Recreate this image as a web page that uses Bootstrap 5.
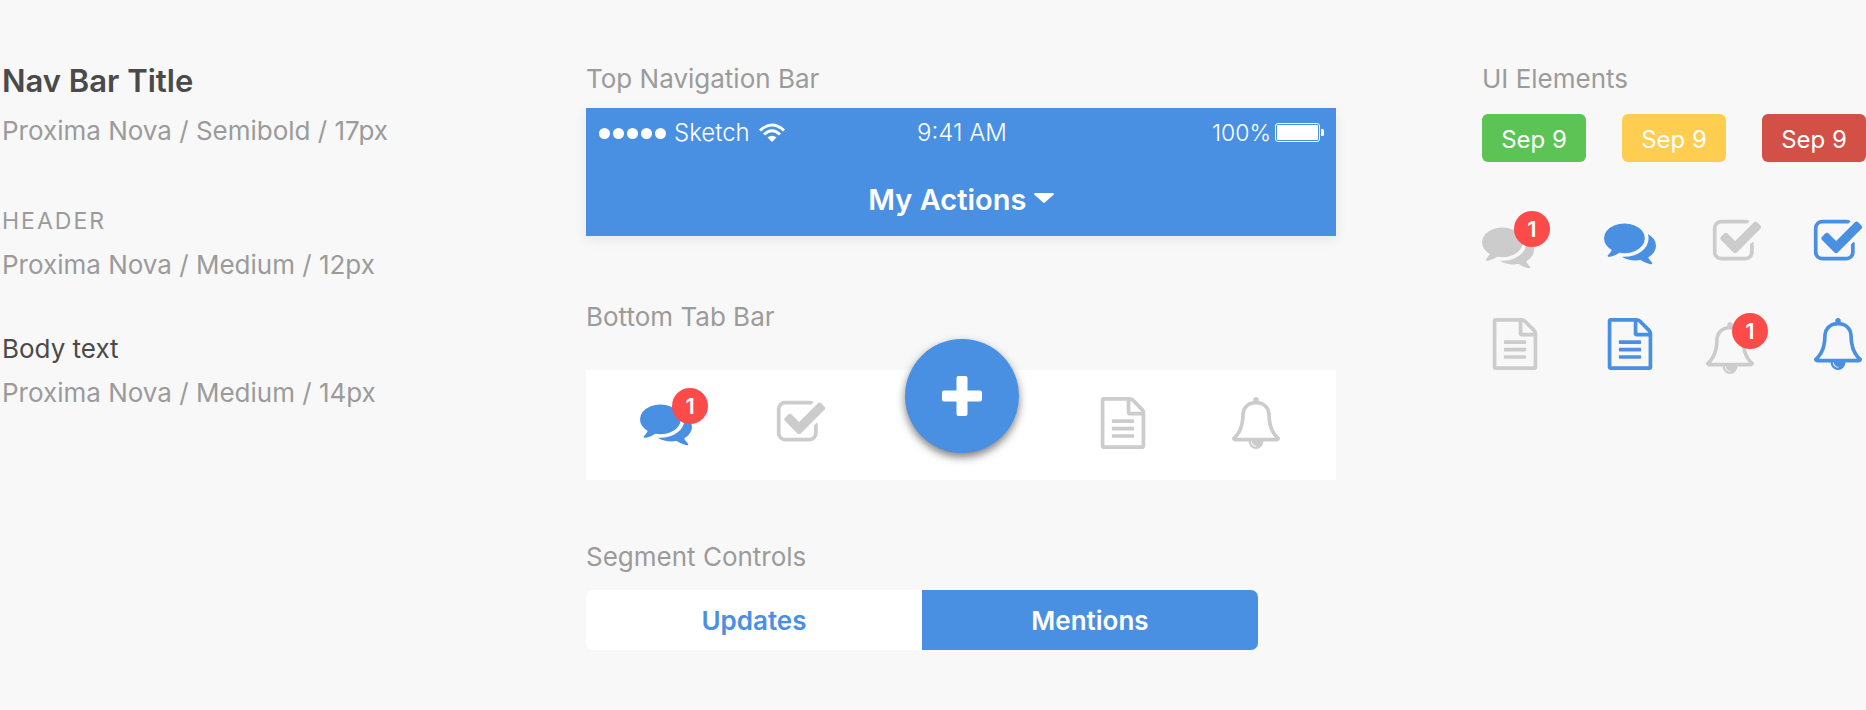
<!DOCTYPE html>
<html lang="en">
<head>
<meta charset="utf-8">
<meta name="viewport" content="width=device-width, initial-scale=1">
<title>Mobile UI style guide</title>
<link rel="stylesheet" href="https://cdn.jsdelivr.net/npm/bootstrap@5.3.0/dist/css/bootstrap.min.css">
<style>
  :root { --blue: #4a90e2; --alert: #fc4b48; --idle: #cccccc; --muted: #9b9b9b; --ink: #4a4a4a; }
  body { background: #f8f8f8; color: var(--ink); font-family: Inter, "Liberation Sans", sans-serif; }
  .guide { display: grid; grid-template-columns: 586fr 896fr 384fr; padding-top: 63px; }
  .type-col { padding-left: 2px; }
  .bars-col { padding-right: 16.3%; }
  .label-text { font-size: 26px; line-height: 32px; font-weight: 400; color: var(--muted); margin: 0; }
  .sample-title { font-size: 31px; line-height: 36px; font-weight: 600; margin: 0 0 16px; }
  .sample-header { font-size: 23px; line-height: 28px; letter-spacing: 2px; font-weight: 400; color: var(--muted); margin: 60px 0 14px; }
  .sample-body { font-size: 26px; line-height: 32px; margin: 52px 0 12px; }

  .phone-nav { background: var(--blue); color: #fff; height: 128px; margin: 13px 0 65px; box-shadow: 0 4px 12px rgba(0,0,0,.07); }
  .status-bar { display: grid; grid-template-columns: 1fr auto 1fr; padding: 10px 11px 0 13px; font-size: 24px; line-height: 30px; font-weight: 300; }
  .signal { display: flex; gap: 3px; margin-right: 8px; }
  .signal i { width: 11px; height: 11px; border-radius: 50%; background: #fff; }
  .percent { font-size: 23px; }
  .title-btn { font-size: 29px; line-height: 40px; font-weight: 600; color: #fff; background: none; border: 0; padding: 0; }

  .tab-bar { display: grid; grid-template: 110px / 148fr 120fr 202fr 120fr 144fr; padding: 0 8px 0 6px; background: #fff; margin: 37px 0 61px; justify-items: center; align-items: center; }
  .icon-btn { position: relative; display: block; padding: 0; border: 0; background: none; color: var(--idle); line-height: 0; }
  .icon-btn svg { width: 52px; height: 52px; fill: currentColor; }
  .icon-btn.on { color: var(--blue); }
  .tab-bar .icon-btn { margin-bottom: 4px; }
  .count { position: absolute; left: 32px; top: -9px; width: 36px; height: 36px; border-radius: 50%; background: var(--alert); color: #fff; font-size: 22px; line-height: 36px; font-weight: 600; text-align: center; }
  .count.near { left: 28px; }
  .fab { width: 114px; height: 114px; border: 0; border-radius: 50%; background: var(--blue); box-shadow: 0 4px 8px rgba(0,0,0,.5); margin: -62px 0 0; padding: 0; align-self: center; }
  .tab-bar .fab { margin: -58px 0 0; }

  .segments { display: flex; width: 89.6%; height: 60px; margin-top: 17px; }
  .segments .btn { flex: 1; display: flex; align-items: center; justify-content: center; border: 0; border-radius: 0; font-size: 26px; font-weight: 600; background: #fff; color: var(--blue); }
  .segments .btn:first-of-type { border-radius: 7px 0 0 7px; }
  .segments .btn:last-of-type { border-radius: 0 7px 7px 0; }
  .segments .btn-check:checked + .btn { background: var(--blue); color: #fff; }

  .date-row { margin-top: 19px; }
  .date-tag { width: 104px; height: 48px; line-height: 52px; border-radius: 6px; color: #fff; font-size: 24px; text-align: center; }
  .tag-green { background: #5cc455; } .tag-yellow { background: #ffcd4f; } .tag-red { background: #d35046; }
  .icon-grid { display: grid; grid-template-columns: 122fr 100fr 108fr 54fr; row-gap: 46px; margin-top: 54px; }
  .icon-grid > div { height: 56px; }
  .shift { padding-left: 7px; }
  .drop { padding-top: 4px; }
</style>
</head>
<body>
<svg class="d-none">
  <symbol id="comments" viewBox="0 0 1792 1792"><path d="M1408 768q0 139-94 257t-256.500 186.500-353.500 68.500q-86 0-176-16-124 88-278 128-36 9-86 16h-3q-11 0-20.500-8t-11.500-21q-1-3-1-6.500t.5-6.500 2-6l2.500-5t3.500-5.500 4-5 4.500-5 4-4.500q5-6 23-25t26-29.500 22.500-29 25-38.500 20.500-44q-124-72-195-177t-71-224q0-139 94-257t256.500-186.500 353.500-68.500 353.500 68.500 256.500 186.500 94 257zm384 256q0 120-71 224.500t-195 176.500q10 24 20.500 44t25 38.500 22.500 29 26 29.500 23 25q1 1 4 4.500t4.500 5 4 5 3.500 5.500l2.500 5t2 6 .5 6.500-1 6.500q-3 14-13 22t-22 7q-50-7-86-16-154-40-278-128-90 16-176 16-271 0-472-132 58 4 88 4 161 0 309-45t264-129q125-92 192-212t67-254q0-77-23-152 129 71 204 178t75 230z"/></symbol>
  <symbol id="check" viewBox="0 0 1792 1792"><path d="M1472 930v318q0 119-84.500 203.500t-203.500 84.500h-832q-119 0-203.500-84.500t-84.500-203.500v-832q0-119 84.500-203.500t203.500-84.500h832q63 0 117 25 15 7 18 23 3 17-9 29l-49 49q-10 10-23 10-3 0-9-2-23-6-45-6h-832q-66 0-113 47t-47 113v832q0 66 47 113t113 47h832q66 0 113-47t47-113v-254q0-13 9-22l64-64q10-10 23-10 6 0 12 3 20 8 20 29zm231-489l-814 814q-24 24-57 24t-57-24l-430-430q-24-24-24-57t24-57l110-110q24-24 57-24t57 24l263 263 647-647q24-24 57-24t57 24l110 110q24 24 24 57t-24 57z"/></symbol>
  <symbol id="file" viewBox="0 0 1792 1792"><path d="M1596 380q28 28 48 76t20 88v1152q0 40-28 68t-68 28h-1344q-40 0-68-28t-28-68v-1600q0-40 28-68t68-28h896q40 0 88 20t76 48zm-444-244v376h376q-10-29-22-41l-313-313q-12-12-41-22zm384 1528v-1024h-416q-40 0-68-28t-28-68v-416h-768v1536h1280zm-1024-864q0-14 9-23t23-9h704q14 0 23 9t9 23v64q0 14-9 23t-23 9h-704q-14 0-23-9t-9-23v-64zm736 224q14 0 23 9t9 23v64q0 14-9 23t-23 9h-704q-14 0-23-9t-9-23v-64q0-14 9-23t23-9h704zm0 256q14 0 23 9t9 23v64q0 14-9 23t-23 9h-704q-14 0-23-9t-9-23v-64q0-14 9-23t23-9h704z"/></symbol>
  <symbol id="bell" viewBox="0 0 1792 1792"><path d="M912 1696q0-16-16-16-59 0-101.500-42.500t-42.500-101.500q0-16-16-16t-16 16q0 73 51.500 124.500t124.500 51.500q16 0 16-16zm-666-288h1300q-266-300-266-832 0-51-24-105t-69-103-121.500-80.500-169.500-31.500-169.500 31.500-121.500 80.500-69 103-24 105q0 532-266 832zm1482 0q0 52-38 90t-90 38h-448q0 106-75 181t-181 75-181-75-75-181h-448q-52 0-90-38t-38-90q50-42 91-88t85-119.500 74.500-158.500 50-206 19.500-260q0-152 117-282.500t307-158.500q-8-19-8-39 0-40 28-68t68-28 68 28 28 68q0 20-8 39 190 28 307 158.500t117 282.500q0 139 19.500 260t50 206 74.500 158.500 85 119.500 91 88z"/></symbol>
</svg>

<main class="guide">
  <section class="type-col">
    <h1 class="sample-title">Nav Bar Title</h1>
    <p class="label-text">Proxima Nova / Semibold / 17px</p>
    <h2 class="sample-header">HEADER</h2>
    <p class="label-text">Proxima Nova / Medium / 12px</p>
    <p class="sample-body">Body text</p>
    <p class="label-text">Proxima Nova / Medium / 14px</p>
  </section>

  <section class="bars-col">
    <h2 class="label-text">Top Navigation Bar</h2>
    <div class="phone-nav">
      <div class="status-bar">
        <div class="d-flex align-items-center">
          <span class="signal"><i></i><i></i><i></i><i></i><i></i></span>
          <span>Sketch</span>
          <svg class="ms-2" width="28" height="20" viewBox="0 0 28 20" fill="none" stroke="#fff" stroke-width="3">
            <path d="M2 7.500Q14-3.500 26 7.500"/><path d="M6 11.500Q14 4 22 11.500"/>
            <path d="M14 19l-4.500-4.500Q14 11 18.500 14.500z" fill="#fff" stroke="none"/>
          </svg>
        </div>
        <span>9:41 AM</span>
        <div class="d-flex align-items-center justify-content-end">
          <span class="percent">100%</span>
          <svg class="ms-1" width="50" height="20" viewBox="0 0 50 20" fill="#fff">
            <rect x=".5" y=".5" width="44" height="18" rx="2.500" fill="none" stroke="#fff"/>
            <rect x="2" y="2" width="41" height="15" rx="1"/>
            <path d="M46 6h1.500q1.500 0 1.500 1.500v4q0 1.500-1.500 1.500H46z"/>
          </svg>
        </div>
      </div>
      <div class="text-center pt-4 mt-2">
        <button type="button" class="title-btn">My Actions
          <svg class="mb-2" width="20" height="11" viewBox="0 0 20 11" fill="#fff"><path d="M1 0h18q1.500.5.5 1.800l-8.300 7.500q-1.200 1-2.400 0L.5 1.800Q-.5.500 1 0z"/></svg>
        </button>
      </div>
    </div>

    <h2 class="label-text">Bottom Tab Bar</h2>
    <nav class="tab-bar" aria-label="Tabs">
      <button type="button" class="icon-btn on" aria-label="Comments"><svg><use href="#comments"/></svg><span class="count">1</span></button>
      <button type="button" class="icon-btn" aria-label="Actions"><svg><use href="#check"/></svg></button>
      <button type="button" class="fab" aria-label="Add">
        <svg width="40" height="40" viewBox="0 0 40 40" fill="#fff"><rect x="14.500" width="11" height="40" rx="2"/><rect y="14.500" width="40" height="11" rx="2"/></svg>
      </button>
      <button type="button" class="icon-btn" aria-label="Documents"><svg><use href="#file"/></svg></button>
      <button type="button" class="icon-btn" aria-label="Notifications"><svg><use href="#bell"/></svg></button>
    </nav>

    <h2 class="label-text">Segment Controls</h2>
    <div class="segments" role="group" aria-label="Feed">
      <input type="radio" class="btn-check" name="feed" id="updates">
      <label class="btn" for="updates">Updates</label>
      <input type="radio" class="btn-check" name="feed" id="mentions" checked>
      <label class="btn" for="mentions">Mentions</label>
    </div>
  </section>

  <section>
    <h2 class="label-text">UI Elements</h2>
    <div class="date-row d-flex justify-content-between">
      <span class="date-tag tag-green">Sep 9</span>
      <span class="date-tag tag-yellow">Sep 9</span>
      <span class="date-tag tag-red">Sep 9</span>
    </div>
    <div class="icon-grid">
      <div class="drop"><button type="button" class="icon-btn" aria-label="Comments, 1 new"><svg><use href="#comments"/></svg><span class="count">1</span></button></div>
      <div><button type="button" class="icon-btn on" aria-label="Comments, active"><svg><use href="#comments"/></svg></button></div>
      <div class="shift"><button type="button" class="icon-btn" aria-label="Actions"><svg><use href="#check"/></svg></button></div>
      <div><button type="button" class="icon-btn on" aria-label="Actions, active"><svg><use href="#check"/></svg></button></div>
      <div class="shift"><button type="button" class="icon-btn" aria-label="Documents"><svg><use href="#file"/></svg></button></div>
      <div><button type="button" class="icon-btn on" aria-label="Documents, active"><svg><use href="#file"/></svg></button></div>
      <div class="drop"><button type="button" class="icon-btn" aria-label="Notifications, 1 new"><svg><use href="#bell"/></svg><span class="count near">1</span></button></div>
      <div><button type="button" class="icon-btn on" aria-label="Notifications, active"><svg><use href="#bell"/></svg></button></div>
    </div>
  </section>
</main>
<script src="https://cdn.jsdelivr.net/npm/bootstrap@5.3.0/dist/js/bootstrap.bundle.min.js"></script>
</body>
</html>
